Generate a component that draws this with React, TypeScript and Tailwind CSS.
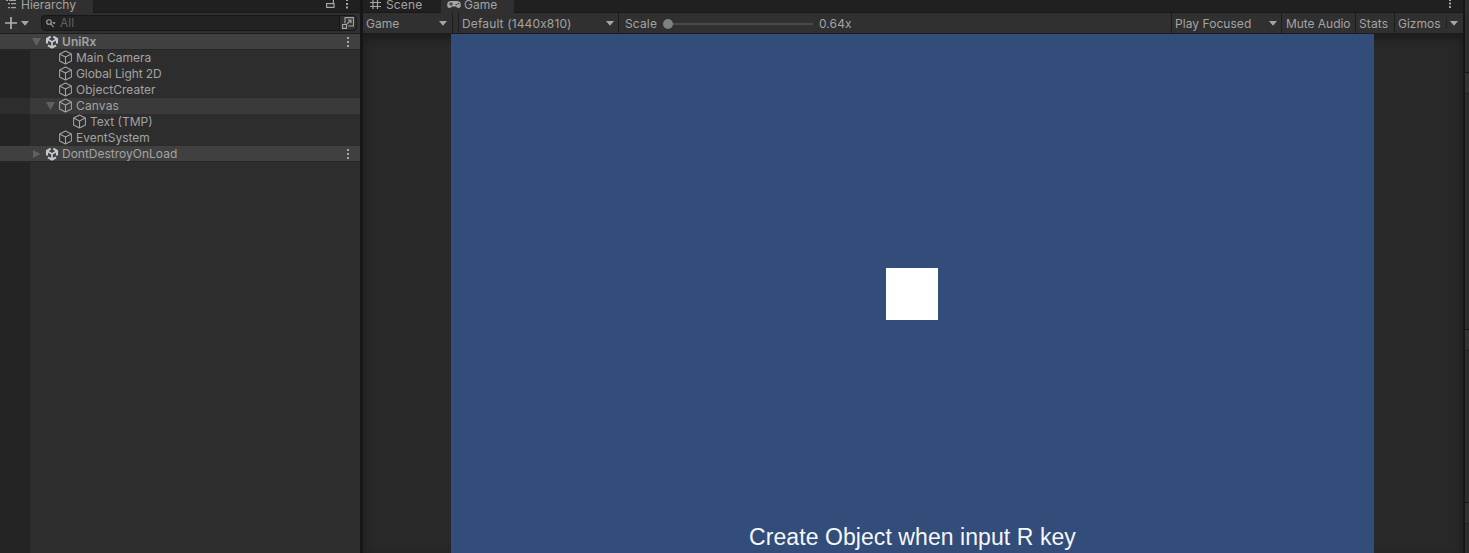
import type { ReactNode } from "react";

function Cube() {
  return (
    <svg className="-mt-px -ml-px h-[15px] w-[15px] shrink-0" viewBox="0 0 15 15" fill="none" stroke="#a3a3a3" strokeWidth="1.05" strokeLinejoin="round">
      <path d="M7.5 1 13.4 4v7L7.5 14 1.6 11V4zM1.6 4l5.9 3 5.9-3M7.5 7v7" />
    </svg>
  );
}

function UnityLogo() {
  return (
    <svg className="h-[14px] w-[14px] shrink-0" viewBox="0 0 14 14" fill="none" stroke="#c4cad0">
      <path d="M5.700 1.700 2 3.900v4.600M8.300 1.700 12 3.900v4.600M3 10.300l4 2.300 4-2.300" strokeWidth="2.100" />
      <path d="M7 7v5.500M7 7 2.500 4.200M7 7l4.500-2.800" strokeWidth="1.700" />
    </svg>
  );
}

function Down({ className = "" }: { className?: string }) {
  return (
    <svg className={`h-[5px] w-2 shrink-0 ${className}`} viewBox="0 0 8 5">
      <path d="M0 0h8L4 4.800z" fill="#a5a5a5" />
    </svg>
  );
}

function Fold({ open }: { open: boolean }) {
  return (
    <svg className="h-2 w-[9px] shrink-0" viewBox="0 0 9 8">
      <path d={open ? "M0 0h9L4.500 8z" : "M1 0v8l7.500-4z"} fill="#606060" />
    </svg>
  );
}

function Kebab({ className = "" }: { className?: string }) {
  return (
    <svg className={`h-[10px] w-[2px] shrink-0 ${className}`} viewBox="0 0 2 10">
      <path d="M0 0h2v2H0zM0 4h2v2H0zM0 8h2v2H0z" fill="#a5a5a5" />
    </svg>
  );
}

type RowProps = { pad: string; label: string; tone?: string; fold?: boolean; scene?: boolean; bold?: boolean; tracking?: string };

function Row({ pad, label, tone = "", fold, scene = false, bold = false, tracking = "tracking-normal" }: RowProps) {
  return (
    <div className={`flex h-4 shrink-0 items-center ${pad} ${tone}`}>
      <div className="flex w-[13px] shrink-0 items-center">{fold !== undefined && <Fold open={fold} />}</div>
      <div className="flex w-[17px] shrink-0 items-center">{scene ? <UnityLogo /> : <Cube />}</div>
      <span className={`whitespace-nowrap leading-4 ${bold ? "font-semibold" : ""} ${tracking}`}>{label}</span>
      {scene && <Kebab className="mr-[11px] ml-auto" />}
    </div>
  );
}

function Hierarchy() {
  return (
    <section className="flex w-[360px] shrink-0 flex-col bg-[#2d2d2d]">
      <div className="flex h-[13px] shrink-0 items-end bg-[#202020]">
        <div className="flex h-[13px] w-[94px] items-start border-r border-[#1b1b1b] bg-[#303030] pl-[6px]">
          <svg className="mr-1 h-[10px] w-[11px]" viewBox="0 0 11 10" fill="#a5a5a5">
            <path d="M0 0h2v1H0zM3 0h7v1H3zM2 3h2v1.200H2zM5 3h5v1.200H5zM2 7h2v1.200H2zM5 7h5v1.200H5z" />
          </svg>
          <span className="-mt-[3px] leading-4">Hierarchy</span>
        </div>
        <div className="flex h-full flex-1 items-start border-b border-[#191919]">
          <svg className="ml-[232px] h-[9px] w-[9px]" viewBox="0 0 9 9" fill="none" stroke="#a5a5a5" strokeWidth="1.200">
            <path d="M.600 3.600h7.400v3.800H.600zM7.400 3.600V0" />
          </svg>
          <svg className="ml-[11px] h-[9px] w-[2px]" viewBox="0 0 2 9" fill="#a5a5a5">
            <path d="M0 0h2v1H0zM0 3h2v2H0zM0 6.500h2v2H0z" />
          </svg>
        </div>
      </div>
      <div className="flex h-[21px] shrink-0 items-center border-b border-[#1c1c1c] bg-[#303030] pl-[5px]">
        <svg className="h-3 w-3" viewBox="0 0 12 12" stroke="#b0b0b0" strokeWidth="1.700">
          <path d="M6 0v12M0 6h12" />
        </svg>
        <Down className="ml-1" />
        <div className="ml-3 flex h-4 w-[316px] items-center rounded border border-[#171717] bg-[#222222]">
          <svg className="ml-1 h-[9px] w-[10px]" viewBox="0 0 10 9" fill="none" stroke="#a5a5a5" strokeWidth="1.100">
            <circle cx="3" cy="3" r="2.300" />
            <path d="M4.700 4.700 7.500 8" />
            <path d="M6.200 3.200h3.600L8 5.200z" fill="#a5a5a5" stroke="none" />
          </svg>
          <span className="ml-1 text-[12px] leading-[14px] text-[#606060]">All</span>
          <div className="ml-auto flex h-full w-[17px] items-center justify-center rounded-r border-l border-[#171717] bg-[#303030]">
            <svg className="h-3 w-3" viewBox="0 0 12 12" fill="none" stroke="#a5a5a5" strokeWidth="1.100">
              <path d="M3 6.500V.600h8.400v8.400H6M.600 7.500H4.500v3.900H.600zM5 7l4-4M5.800 3H9v3.200" />
            </svg>
          </div>
        </div>
      </div>
      <div className="flex flex-1 flex-col bg-[linear-gradient(90deg,#242424_30px,#2d2d2d_30px)]">
        <Row pad="pl-8" label="UniRx" scene fold bold tone="border-b border-[#262626] bg-[#404040]" tracking="tracking-[0.100px]" />
        <Row pad="pl-[46px]" label="Main Camera" />
        <Row pad="pl-[46px]" label="Global Light 2D" tracking="tracking-[-0.090px]" />
        <Row pad="pl-[46px]" label="ObjectCreater" />
        <Row pad="pl-[46px]" label="Canvas" fold tone="bg-[linear-gradient(90deg,#2d2d2d_30px,#3a3a3a_30px)]" tracking="tracking-[0.150px]" />
        <Row pad="pl-[60px]" label="Text (TMP)" />
        <Row pad="pl-[46px]" label="EventSystem" />
        <Row pad="pl-8" label="DontDestroyOnLoad" scene fold={false} tone="border-b border-[#262626] bg-[#404040]" />
      </div>
    </section>
  );
}

function Cell({ width, children }: { width: string; children?: ReactNode }) {
  return <div className={`flex h-full shrink-0 items-center border-r border-[#1c1c1c] whitespace-nowrap ${width}`}>{children}</div>;
}

function GameView() {
  return (
    <section className="flex w-[1100px] shrink-0 flex-col">
      <div className="flex h-[13px] shrink-0 bg-[#202020]">
        <div className="flex h-full w-[78px] items-start border-b border-[#191919] pl-[7px]">
          <svg className="mr-[5px] h-[10px] w-[11px]" viewBox="0 0 11 10" stroke="#a5a5a5" strokeWidth="1.200">
            <path d="M3 0v9M7.500 0v9M0 2.500h11M0 6.500h11" />
          </svg>
          <span className="-mt-[3px] leading-4 tracking-[0.150px]">Scene</span>
        </div>
        <div className="flex h-full w-[73px] items-start bg-[#303030] pl-[6px]">
          <svg className="mr-[3px] h-[9px] w-[14px]" viewBox="0 0 14 9">
            <path d="M4 1h6a3.500 3.500 0 0 1 3.800 3.800C13.800 7 13 8 11.500 8S9.500 6.500 8.500 6.500h-3C4.500 6.500 4 8 2.500 8S.200 7 .200 4.800A3.500 3.500 0 0 1 4 1z" fill="#a5a5a5" />
            <path d="M2 4h4M4 2.200v3.600" stroke="#303030" strokeWidth="1" />
            <path d="M8.600 4h1.300v1.300H8.600zM10.800 3h1.300v1.300h-1.300z" fill="#303030" />
          </svg>
          <span className="-mt-[3px] leading-4">Game</span>
        </div>
        <div className="flex flex-1 items-start justify-end border-b border-[#191919] pr-3">
          <svg className="h-[9px] w-[2px]" viewBox="0 0 2 9" fill="#a5a5a5">
            <path d="M0 0h2v1H0zM0 2.500h2v2H0zM0 6h2v2H0z" />
          </svg>
        </div>
      </div>
      <div className="flex h-[21px] shrink-0 items-center border-b border-[#1c1c1c] bg-[#303030]">
        <Cell width="w-[90px]">
          <span className="mt-[2px] ml-[3px]">Game</span>
          <Down className="mr-[5px] ml-auto" />
        </Cell>
        <Cell width="w-[6px]" />
        <Cell width="w-[160px]">
          <span className="mt-[2px] ml-[3px] tracking-[0.130px]">Default (1440x810)</span>
          <Down className="mr-1 ml-auto" />
        </Cell>
        <Cell width="w-[553px]">
          <span className="mt-[2px] ml-[6px] w-[38px] tracking-[0.150px]">Scale</span>
          <div className="mt-px flex w-[150px] items-center">
            <div className="h-[10px] w-[10px] rounded-full bg-[#808080]" />
            <div className="h-[2px] flex-1 bg-[#4a4a4a]" />
          </div>
          <span className="mt-[2px] ml-[6px] tracking-[0.100px]">0.64x</span>
        </Cell>
        <Cell width="w-[110px]">
          <span className="mt-[2px] ml-[3px] tracking-[0.050px]">Play Focused</span>
          <Down className="mr-1 ml-auto" />
        </Cell>
        <Cell width="w-[74px]">
          <span className="mt-[2px] ml-1 tracking-[-0.050px]">Mute Audio</span>
        </Cell>
        <Cell width="w-[39px]">
          <span className="mt-[2px] ml-[3px] tracking-[0.150px]">Stats</span>
        </Cell>
        <div className="flex flex-1 items-center">
          <span className="mt-[2px] ml-[3px] w-[48px]">Gizmos</span>
          <div className="h-3 w-px bg-[#222222]" />
          <Down className="ml-[3px]" />
        </div>
      </div>
      <div className="flex flex-1 bg-[#282828] pl-[88px] shadow-[inset_0_4px_9px_#1b1b1b]">
        <div className="flex w-[923px] flex-col items-center bg-[#324d79]">
          <div className="mt-[234px] mr-px h-[52px] w-[52px] bg-white" />
          <p className="mt-[201px] font-['Liberation_Sans',sans-serif] text-[23px] leading-8 tracking-[0.070px] whitespace-nowrap text-[#f5f7fa]">Create Object when input R key</p>
        </div>
      </div>
    </section>
  );
}

function SidePanel() {
  return (
    <aside className="flex w-1 shrink-0 flex-col bg-[#2d2d2d]">
      <div className="h-[13px] bg-[#303030]" />
      <div className="h-[59px]" />
      <div className="h-[22px] border-t border-b border-t-[#151515] border-b-[#222222] bg-[#333333]" />
      <div className="h-[235px]" />
      <div className="h-[22px] border-t border-b border-t-[#151515] border-b-[#222222] bg-[#333333]" />
      <div className="h-[151px]" />
      <div className="h-[22px] border-t border-b border-t-[#151515] border-b-[#222222] bg-[#333333]" />
    </aside>
  );
}

export default function App() {
  return (
    <main className="flex h-[553px] w-[1469px] overflow-hidden bg-[#161616] font-['Inter',sans-serif] text-[12px] text-[#a3a3a3]">
      <Hierarchy />
      <div className="w-[3px] shrink-0 bg-[#161616]" />
      <GameView />
      <div className="w-[2px] shrink-0 bg-[#161616]" />
      <SidePanel />
    </main>
  );
}
